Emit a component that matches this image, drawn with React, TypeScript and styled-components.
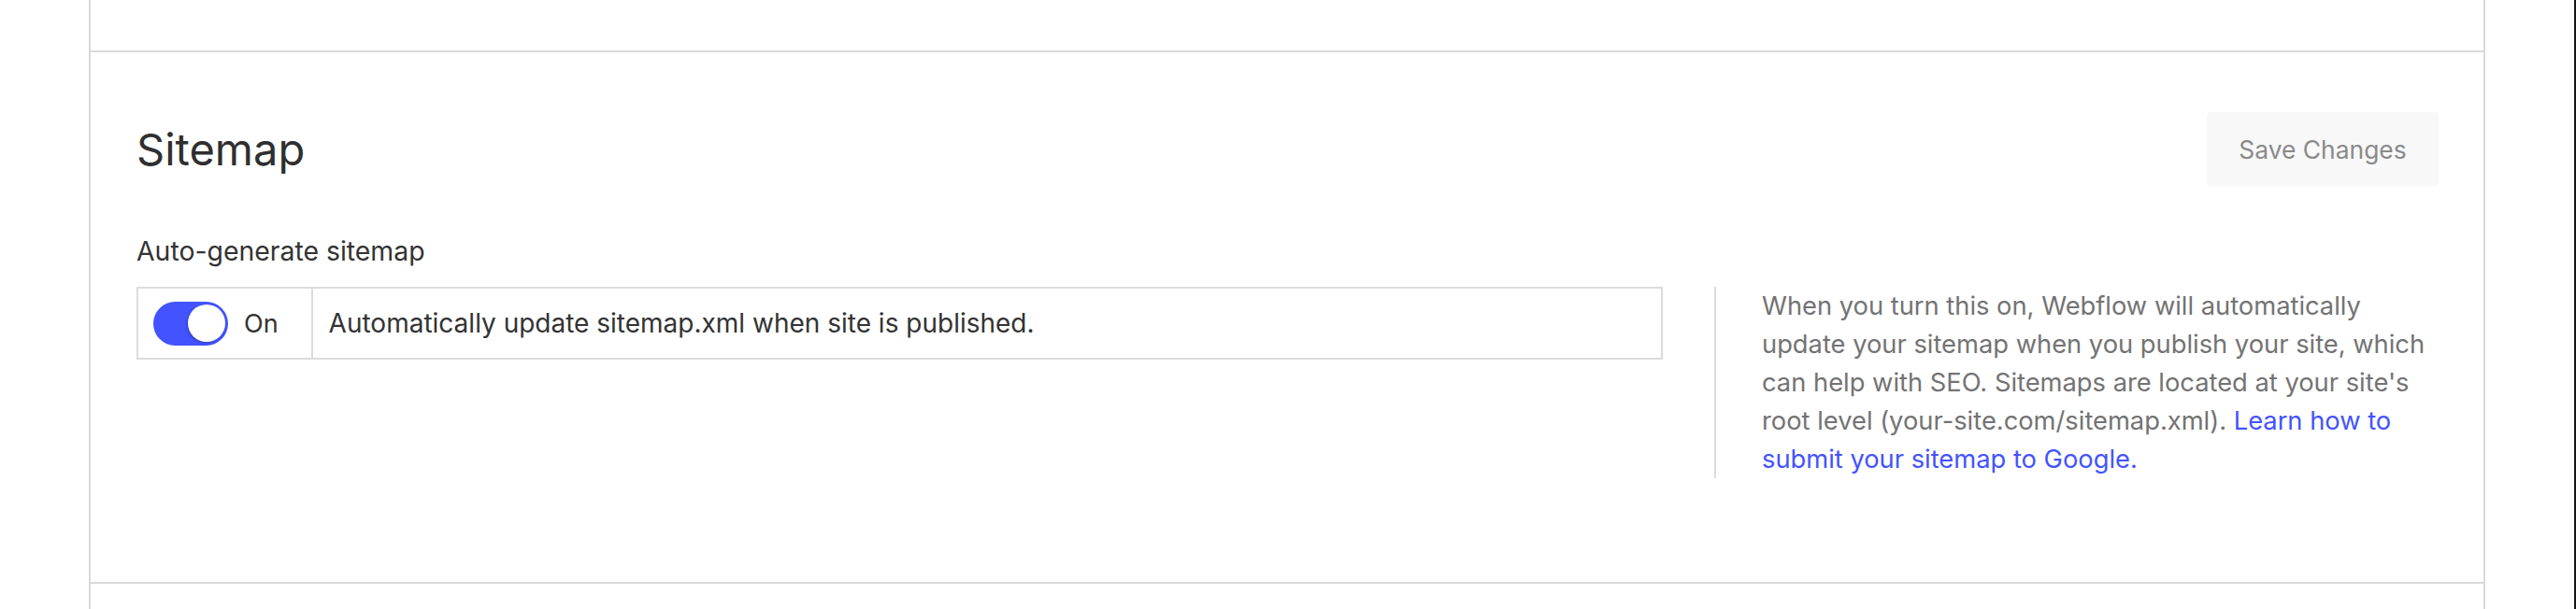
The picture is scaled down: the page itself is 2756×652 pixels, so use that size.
import * as React from "react";
import styled, { createGlobalStyle } from "styled-components";

const GlobalStyle = createGlobalStyle`
  html, body {
    margin: 0;
    padding: 0;
    background: #fff;
  }
  body {
    font-family: Inter, "Noto Sans", Arial, sans-serif;
    color: #333;
    -webkit-font-smoothing: antialiased;
  }
`;

const Page = styled.div`
  display: flex;
  min-height: 652px;
  border-right: 2px solid #151515;
  overflow: hidden;
`;

const Column = styled.div`
  width: 2560px;
  margin: 0 auto;
  border-left: 2px solid #dadada;
  border-right: 2px solid #dadada;
  display: flex;
  flex-direction: column;
`;

const Section = styled.section<{ $height?: number }>`
  border-bottom: 2px solid #dadada;
  ${(p) => (p.$height ? `height: ${p.$height}px;` : "")}
  &:last-child {
    border-bottom: none;
    flex: 1;
  }
`;

const SettingsSection = styled.section`
  border-bottom: 2px solid #dadada;
  padding: 64px 48px 111px 49px;
`;

const Header = styled.div`
  display: flex;
  align-items: center;
  justify-content: space-between;
  height: 79px;
`;

const Title = styled.h2`
  margin: 0;
  font-size: 47px;
  font-weight: 400;
  color: #2f2f2f;
`;

const SaveButton = styled.button`
  width: 248px;
  height: 79px;
  border: none;
  border-radius: 4px;
  background: #f8f8f8;
  color: #8a8a8a;
  font-family: inherit;
  font-size: 26.4px;
  cursor: not-allowed;
`;

const Body = styled.div`
  display: grid;
  grid-template-columns: 1fr 775px;
  grid-template-rows: auto auto;
  column-gap: 55px;
  margin-top: 50px;
`;

const FieldLabel = styled.div`
  grid-column: 1;
  font-size: 28.4px;
  line-height: 40px;
  color: #333;
  margin-bottom: 18px;
`;

const FieldBox = styled.div`
  grid-column: 1;
  grid-row: 2;
  align-self: start;
  display: flex;
  height: 74px;
  border: 2px solid #dcdcdc;
`;

const ToggleCell = styled.label`
  display: flex;
  align-items: center;
  gap: 17px;
  padding: 0 35px 0 16px;
  border-right: 2px solid #dcdcdc;
  font-size: 27px;
  color: #333;
  cursor: pointer;
`;

const Track = styled.span<{ $on: boolean }>`
  position: relative;
  width: 80px;
  height: 47px;
  border-radius: 24px;
  background: ${(p) => (p.$on ? "#4353ff" : "#cfcfcf")};
  flex-shrink: 0;
`;

const Knob = styled.span<{ $on: boolean }>`
  position: absolute;
  top: 3.5px;
  left: ${(p) => (p.$on ? "36.5px" : "3.5px")};
  width: 40px;
  height: 40px;
  border-radius: 50%;
  background: #fff;
  box-shadow: -1px 1px 3px rgba(0, 0, 0, 0.25);
`;

const HiddenInput = styled.input`
  position: absolute;
  opacity: 0;
  width: 0;
  height: 0;
`;

const FieldText = styled.div`
  display: flex;
  align-items: center;
  padding-left: 17px;
  font-size: 28px;
  color: #333;
`;

const Help = styled.p`
  grid-column: 2;
  grid-row: 2;
  margin: 0;
  padding-left: 49px;
  border-left: 2px solid #dcdcdc;
  font-size: 27.3px;
  line-height: 41px;
  color: #737373;
`;

const HelpLink = styled.a`
  color: #4353ff;
  text-decoration: none;
`;

export default function App() {
  const [on, setOn] = React.useState(true);

  return (
    <>
      <GlobalStyle />
      <Page>
        <Column>
          <Section $height={54} />
          <SettingsSection>
            <Header>
              <Title>Sitemap</Title>
              <SaveButton disabled>Save Changes</SaveButton>
            </Header>
            <Body>
              <FieldLabel>Auto-generate sitemap</FieldLabel>
              <FieldBox>
                <ToggleCell>
                  <HiddenInput
                    type="checkbox"
                    checked={on}
                    onChange={() => setOn(!on)}
                  />
                  <Track $on={on}>
                    <Knob $on={on} />
                  </Track>
                  {on ? "On" : "Off"}
                </ToggleCell>
                <FieldText>
                  Automatically update sitemap.xml when site is published.
                </FieldText>
              </FieldBox>
              <Help>
                When you turn this on, Webflow will automatically update your
                sitemap when you publish your site, which can help with SEO.
                Sitemaps are located at your site's root level
                (your-site.com/sitemap.xml).{" "}
                <HelpLink href="#">
                  Learn how to submit your sitemap to Google.
                </HelpLink>
              </Help>
            </Body>
          </SettingsSection>
          <Section />
        </Column>
      </Page>
    </>
  );
}
